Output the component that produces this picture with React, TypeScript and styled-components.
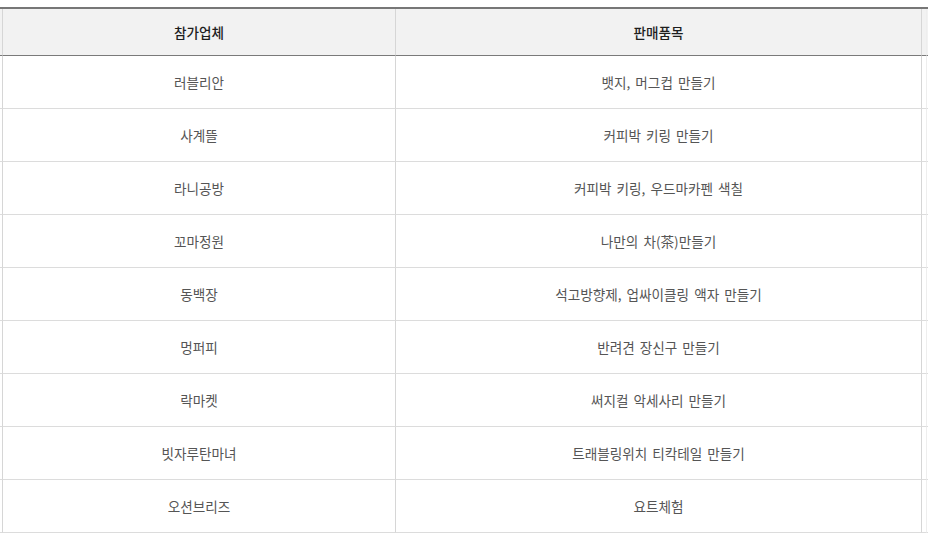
import React from "react";
import styled, { createGlobalStyle } from "styled-components";

const Global = createGlobalStyle`
  html, body { margin: 0; padding: 0; background: #fff; }
  body { font-family: "Noto Sans CJK KR", "Noto Sans", sans-serif; }
`;

const Page = styled.div`
  width: 928px;
  height: 540px;
  overflow: hidden;
  padding-top: 7px;
  box-sizing: border-box;
`;

const Table = styled.div`
  display: grid;
  grid-template-columns: 2px 393px 526px 5px 2px;
  border-top: 2px solid #777;
  width: 928px;
`;

const Cell = styled.div<{ $head?: boolean; $edge?: "none" | "strong" | "faint" }>`
  box-sizing: border-box;
  display: flex;
  align-items: center;
  justify-content: center;
  padding-bottom: 1px;
  height: ${(p) => (p.$head ? "47px" : "53px")};
  background: ${(p) => (p.$head ? "#f2f2f2" : "#fff")};
  border-bottom: 1px solid ${(p) => (p.$head ? "#7a7a7a" : "#dcdcdc")};
  border-left: ${(p) =>
    p.$edge === "none" ? "0" : p.$edge === "faint" ? "1px solid #eeeeee" : "1px solid #d6d6d6"};
  font-size: 13.6px;
  letter-spacing: 0;
  word-spacing: 2px;
  color: ${(p) => (p.$head ? "#1e1e1e" : "#555")};
  font-weight: ${(p) => (p.$head ? 500 : 400)};
  white-space: nowrap;
  overflow: hidden;
`;

const rows: [string, string][] = [
  ["러블리안", "뱃지, 머그컵 만들기"],
  ["사계뜰", "커피박 키링 만들기"],
  ["라니공방", "커피박 키링, 우드마카펜 색칠"],
  ["꼬마정원", "나만의 차(茶)만들기"],
  ["동백장", "석고방향제, 업싸이클링 액자 만들기"],
  ["멍퍼피", "반려견 장신구 만들기"],
  ["락마켓", "써지컬 악세사리 만들기"],
  ["빗자루탄마녀", "트래블링위치 티칵테일 만들기"],
  ["오션브리즈", "요트체험"],
];

function Row({ cells, head }: { cells: [string, string]; head?: boolean }) {
  return (
    <>
      <Cell $head={head} $edge="none" />
      <Cell $head={head}>{cells[0]}</Cell>
      <Cell $head={head}>{cells[1]}</Cell>
      <Cell $head={head} />
      <Cell $head={head} $edge="faint" />
    </>
  );
}

export default function App() {
  return (
    <>
      <Global />
      <Page>
        <Table>
          <Row head cells={["참가업체", "판매품목"]} />
          {rows.map((r, i) => (
            <Row key={i} cells={r} />
          ))}
        </Table>
      </Page>
    </>
  );
}
